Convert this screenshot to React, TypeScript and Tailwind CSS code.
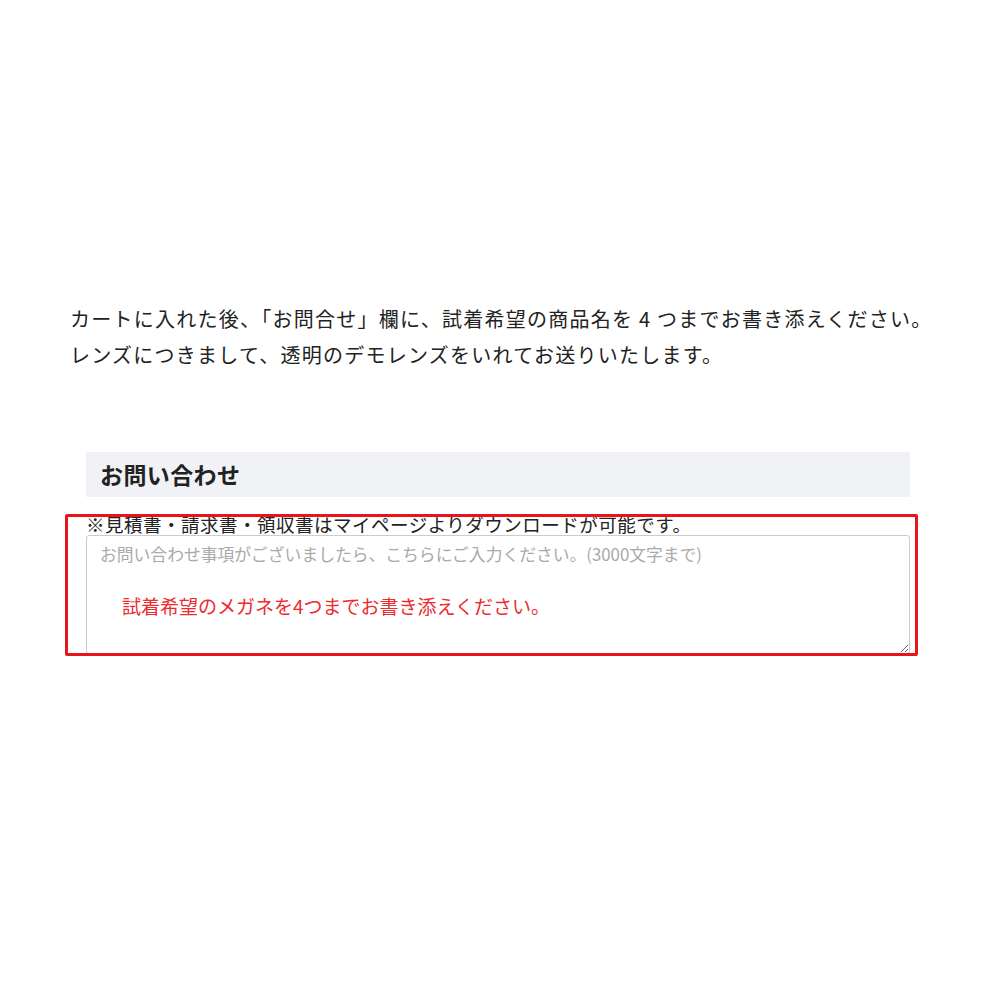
import React from "react";

export default function App() {
  const jp = { fontFamily: '"Noto Sans CJK JP", "Noto Sans", sans-serif' };
  return (
    <div className="w-[1000px] h-[1000px] bg-white relative" style={jp}>
      <div className="pt-[301px] pl-[70px]">
        <p className="text-[20px] leading-[36px] text-[#222] tracking-[1.25px]">
          カートに入れた後、「お問合せ」欄に、試着希望の商品名を 4 つまでお書き添えください。
          <br />
          レンズにつきまして、透明のデモレンズをいれてお送りいたします。
        </p>
      </div>
      <div className="mt-[79px] ml-[86px] w-[824px]">
        <div className="h-[45px] bg-[#f0f2f5] flex items-center pl-[14px]">
          <span className="text-[23px] font-bold text-[#222] tracking-[0.4px]">お問い合わせ</span>
        </div>
        <div className="mt-[16px] text-[18.5px] leading-[22px] text-[#222] tracking-[0.5px]">
          ※見積書・請求書・領収書はマイページよりダウンロードが可能です。
        </div>
        <div className="relative">
          <textarea
            className="block w-full h-[119px] border border-[#ccc] rounded-[3px] px-[13px] pt-[6px] pb-[4px] text-[16.8px] leading-[24px] placeholder:text-[#aaa] resize-y outline-none"
            placeholder="お問い合わせ事項がございましたら、こちらにご入力ください。(3000文字まで)"
            style={jp}
          />
          <div className="absolute left-[36px] top-[58px] text-[19px] leading-[26px] text-[#ec2a2f]">
            試着希望のメガネを4つまでお書き添えください。
          </div>
        </div>
      </div>
      <div className="absolute left-[65px] top-[514px] w-[853px] h-[142px] border-[3px] border-[#e8141c] rounded-[2px] pointer-events-none" />
    </div>
  );
}
